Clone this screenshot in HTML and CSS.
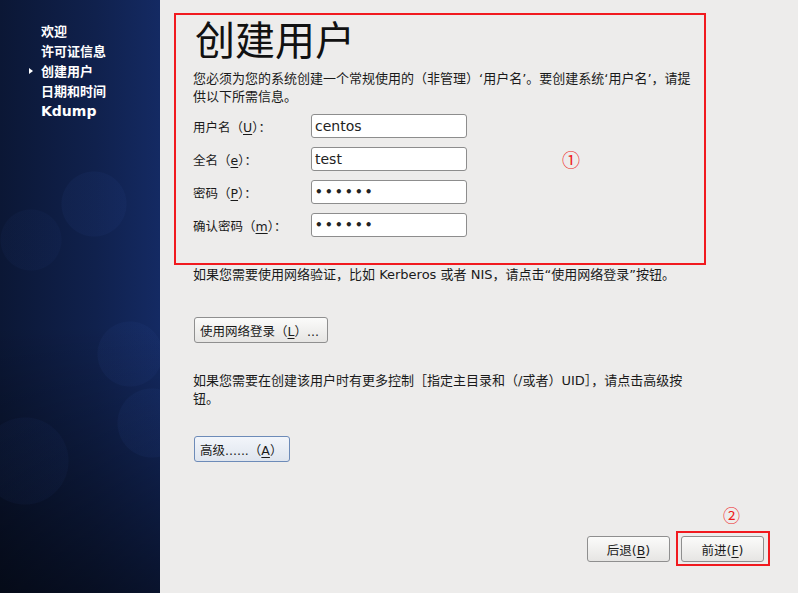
FILE: index.html
```html
<!DOCTYPE html>
<html lang="zh-CN">
<head>
<meta charset="utf-8">
<title>创建用户</title>
<link rel="stylesheet" href="styles.css">
</head>
<body>
<div class="screen">
  <aside class="sidebar">
    <ul class="steps">
      <li>欢迎</li>
      <li>许可证信息</li>
      <li class="current">创建用户</li>
      <li>日期和时间</li>
      <li class="latin">Kdump</li>
    </ul>
  </aside>
  <main class="main">
    <section class="annot">
      <h1 class="title">创建用户</h1>
      <p class="intro">您必须为您的系统创建一个常规使用的（非管理）‘用户名’。要创建系统‘用户名’，请提供以下所需信息。</p>
      <div class="form-wrap">
        <div class="form">
          <label class="lbl">用户名（<u>U</u>）：</label>
          <div class="field">centos</div>
          <label class="lbl">全名（<u>e</u>）：</label>
          <div class="field">test</div>
          <label class="lbl">密码（<u>P</u>）：</label>
          <div class="field pw">••••••</div>
          <label class="lbl">确认密码（<u>m</u>）：</label>
          <div class="field pw">••••••</div>
        </div>
        <span class="mark one">①</span>
      </div>
    </section>
    <p class="note n1">如果您需要使用网络验证，比如 Kerberos 或者 NIS，请点击“使用网络登录”按钮。</p>
    <div class="btnrow r1"><button class="btn">使用网络登录（<u>L</u>）...</button></div>
    <p class="note n2">如果您需要在创建该用户时有更多控制［指定主目录和（/或者）UID］，请点击高级按钮。</p>
    <div class="btnrow r2"><button class="btn focus">高级......（<u>A</u>）</button></div>
    <div class="nav">
      <button class="btn navbtn">后退(<u>B</u>)</button>
      <div class="fwd-wrap">
        <span class="mark two">②</span>
        <div class="fwd-box"><button class="btn navbtn">前进(<u>F</u>)</button></div>
      </div>
    </div>
  </main>
</div>
</body>
</html>
```
FILE: styles.css
```css
html, body {
  margin: 0;
  padding: 0;
}
body {
  font-family: "DejaVu Sans", "Noto Sans CJK SC", sans-serif;
  color: #1a1a1a;
  background: #edeceb;
}
.screen {
  display: flex;
  width: 798px;
  height: 593px;
  overflow: hidden;
}
.sidebar {
  width: 160px;
  flex: none;
  background:
    radial-gradient(circle at 94px 204px, rgba(45,75,150,0.1) 0 32px, transparent 33px),
    radial-gradient(circle at 31px 240px, rgba(45,75,150,0.07) 0 30px, transparent 31px),
    radial-gradient(circle at 130px 354px, rgba(45,75,150,0.1) 0 32px, transparent 33px),
    radial-gradient(circle at 152px 423px, rgba(45,75,150,0.1) 0 34px, transparent 35px),
    radial-gradient(circle at 25px 461px, rgba(45,75,150,0.07) 0 43px, transparent 44px),
    linear-gradient(180deg, rgba(0,0,0,0) 55%, rgba(0,0,0,0.55) 100%),
    linear-gradient(90deg, #0b1735 0%, #10214d 60%, #142a63 100%);
}
.steps {
  list-style: none;
  margin: 0;
  padding: 21px 0 0 41px;
  font-family: "Noto Sans CJK SC", sans-serif;
  font-weight: bold;
  font-size: 13px;
  line-height: 20px;
  color: #ffffff;
}
.steps li {
  position: relative;
}
.steps li.latin {
  font-family: "DejaVu Sans", sans-serif;
  font-size: 14px;
  line-height: 21px;
}
.steps li.current::before {
  content: "";
  position: absolute;
  left: -12px;
  top: 7px;
  border-left: 4px solid #ffffff;
  border-top: 3px solid transparent;
  border-bottom: 3px solid transparent;
}
.main {
  flex: 1;
  display: flex;
  flex-direction: column;
  padding: 13px 0 0 14px;
}
.annot {
  box-sizing: border-box;
  width: 532px;
  height: 252px;
  border: 2px solid #f11a1f;
  padding: 0 12px 0 17px;
}
.title {
  margin: 0;
  padding-left: 2px;
  font-family: "Noto Sans CJK SC", sans-serif;
  font-weight: normal;
  font-size: 40px;
  line-height: 46px;
  color: #111;
}
.intro {
  margin: 9px 0 0;
  width: 500px;
  font-size: 13px;
  line-height: 18px;
}
.form-wrap {
  display: flex;
  align-items: flex-start;
  margin-top: 8px;
}
.form {
  display: grid;
  grid-template-columns: 118px 156px;
  row-gap: 9px;
  align-items: center;
}
.lbl {
  font-size: 12.5px;
}
.field {
  box-sizing: border-box;
  height: 24px;
  background: #fff;
  border: 1px solid #8d8d8d;
  border-radius: 3px;
  padding: 0 3px;
  font-size: 14px;
  line-height: 22px;
  color: #222;
}
.field.pw {
  font-size: 12px;
  font-weight: bold;
  letter-spacing: 2.3px;
}
.mark {
  color: #ee1c1c;
  font-family: "Noto Sans CJK SC", sans-serif;
  font-size: 18px;
  line-height: 18px;
}
.mark.one {
  margin: 36px 0 0 95px;
}
.note {
  margin: 1px 0 0 19px;
  width: 500px;
  font-size: 13px;
  line-height: 18px;
}
.btnrow {
  padding-left: 20px;
}
.r1 {
  margin-top: 33px;
}
.n2 {
  margin-top: 29px;
}
.r2 {
  margin-top: 28px;
}
.btn {
  box-sizing: border-box;
  height: 26px;
  padding: 0 5px;
  font-family: "DejaVu Sans", "Noto Sans CJK SC", sans-serif;
  font-size: 12.5px;
  color: #1a1a1a;
  background: linear-gradient(#fbfbfa, #e6e5e3);
  border: 1px solid #8f8f8f;
  border-radius: 3px;
}
.btn.focus {
  border-color: #6d8bb8;
  background: linear-gradient(#f2f5fa, #dfe5ee);
  width: 96px;
  text-align: left;
}
.r1 .btn {
  width: 134px;
  text-align: left;
}
.nav {
  margin-top: auto;
  margin-bottom: 27px;
  display: flex;
  align-items: flex-end;
  padding-left: 413px;
}
.navbtn {
  width: 83px;
  margin-bottom: 4px;
}
.fwd-wrap {
  display: flex;
  flex-direction: column;
  align-items: flex-start;
  margin-left: 6px;
}
.mark.two {
  font-size: 17px;
  margin: 0 0 7px 47px;
}
.fwd-box {
  box-sizing: border-box;
  width: 94px;
  height: 35px;
  border: 2px solid #f11a1f;
  padding: 3px 0 0 3px;
}
.fwd-box .navbtn {
  margin: 0;
}
u {
  text-decoration: underline;
  text-underline-offset: 2px;
}
```
